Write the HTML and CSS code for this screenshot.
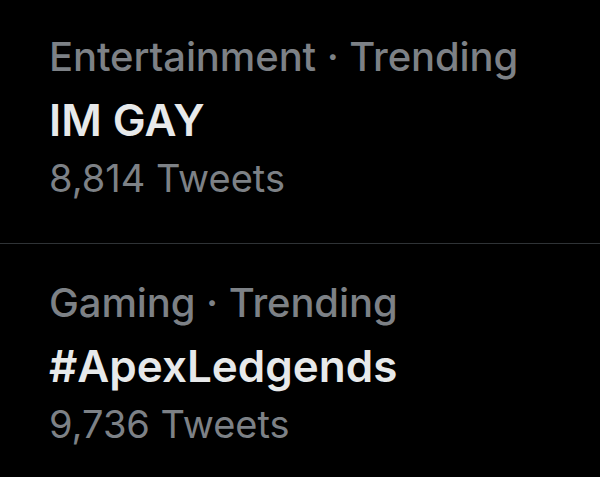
FILE: index.html
```html
<!DOCTYPE html>
<html>
<head>
<meta charset="utf-8">
<link rel="stylesheet" href="styles.css">
</head>
<body>
<div class="list">
  <div class="trend">
    <div class="category">Entertainment · Trending</div>
    <div class="title">IM GAY</div>
    <div class="count">8,814 Tweets</div>
  </div>
  <div class="trend">
    <div class="category">Gaming · Trending</div>
    <div class="title">#ApexLedgends</div>
    <div class="count">9,736 Tweets</div>
  </div>
</div>
</body>
</html>
```
FILE: styles.css
```css
html, body {
  margin: 0;
  padding: 0;
  background: #000;
}
body {
  width: 600px;
  height: 477px;
  overflow: hidden;
  font-family: Inter, "Noto Sans", sans-serif;
}
.list {
  display: flex;
  flex-direction: column;
}
.trend {
  display: flex;
  flex-direction: column;
  padding: 32px 0 0 49px;
  height: 243px;
  box-sizing: border-box;
}
.trend + .trend {
  border-top: 1px solid #2f3336;
  padding-top: 34px;
}
.category {
  color: #7d8186;
  font-size: 40px;
  font-weight: 500;
  line-height: 50px;
  letter-spacing: -0.1px;
}
.title {
  color: #e7e9ea;
  font-size: 44px;
  font-weight: 600;
  line-height: 56px;
  margin-top: 10px;
}
.count {
  color: #7d8186;
  font-size: 38px;
  font-weight: 400;
  line-height: 48px;
  margin-top: 6px;
}
```
